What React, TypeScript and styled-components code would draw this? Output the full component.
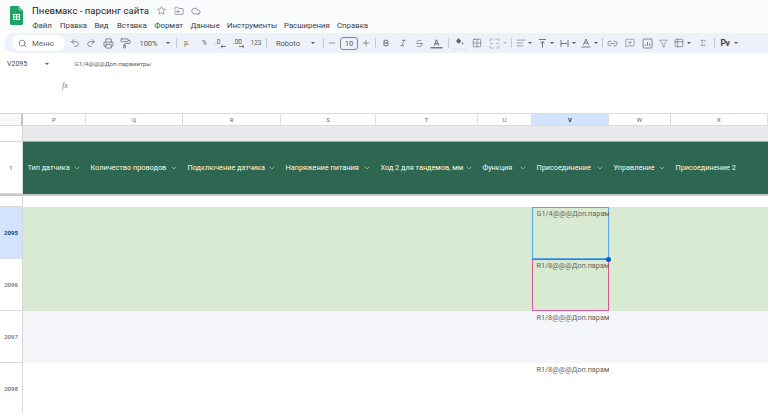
import React from "react";
import styled, { createGlobalStyle } from "styled-components";
import { Search, Undo2, Redo2, Printer, PaintRoller, Minus, Plus, Bold, Italic, Strikethrough, Grid2x2, AlignLeft, Link2, MessageSquarePlus, Filter, Sigma, Star, Cloud, ChevronDown, FolderInput, Table2 } from "lucide-react";

const Global = createGlobalStyle`
  html, body { margin: 0; padding: 0; background: #fff; overflow: hidden; }
  #root { width: 768px; height: 413px; overflow: hidden; }
  * { box-sizing: border-box; }
`;

const Page = styled.div`
  width: 768px; height: 413px; display: flex; flex-direction: column; position: relative;
  font-family: Roboto, "Liberation Sans", sans-serif; color: #444746; background: #fff; overflow: hidden;
`;
const TitleBar = styled.header`
  height: 33px; flex: none; background: #f9fbfd; display: flex; align-items: flex-start; padding: 6px 0 0 10px; gap: 9px;
`;
const TitleStack = styled.div`display: flex; flex-direction: column;`;
const TitleRow = styled.div`display: flex; align-items: center; height: 11px; margin-top: -1px;`;
const DocTitle = styled.div`font-size: 9.6px; line-height: 11px; color: #1f1f1f; width: 125px; white-space: nowrap;`;
const TitleIcon = styled.span<{ $ml: number }>`display: flex; margin-left: ${p => p.$ml}px; color: #5a5d60;`;
const MenuBar = styled.nav`display: flex; margin: 5px 0 0 0.5px; height: 10px; align-items: center;`;
const MenuItem = styled.span<{ $w: number }>`font-size: 7.8px; line-height: 10px; color: #3c4043; width: ${p => p.$w}px; white-space: nowrap;`;

const Toolbar = styled.div`
  height: 20px; flex: none; margin-left: 4px; background: #edf2fa; border-radius: 10px 0 0 10px;
  display: flex; align-items: center; padding-left: 8px;
`;
const MenuPill = styled.div`
  width: 53px; height: 16px; flex: none; border-radius: 8px; background: #fff; display: flex; align-items: center;
  padding-left: 6px; gap: 5px; font-size: 7.8px; color: #5f6368;
`;
const Tool = styled.span<{ $w: number; $ml: number }>`
  flex: none; width: ${p => p.$w}px; margin-left: ${p => p.$ml}px; height: 16px; display: flex; align-items: center; justify-content: center;
  font-size: 7.5px; color: #53565a; white-space: nowrap;
`;
const Small = styled.span`font-size: 6.5px; color: #5a5d60;`;
const Caret = styled.span<{ $muted?: boolean }>`
  width: 0; height: 0; border-left: 2.5px solid transparent; border-right: 2.5px solid transparent;
  border-top: 2.5px solid ${p => (p.$muted ? "#b5b8bb" : "#53565a")};
`;
const Sep = styled.span`width: 1px; height: 10px; background: #c7cbd1;`;
const SizeBox = styled.span`width: 18px; height: 13px; border: 1px solid #80868b; border-radius: 3px; display: flex; align-items: center; justify-content: center; font-size: 7.5px;`;
const PvMark = styled.span`font-size: 8.5px; font-weight: 700; color: #3c4043; letter-spacing: -0.3px;`;

const FormulaArea = styled.div`
  height: 60px; flex: none; background: #fff; display: flex; flex-direction: column; padding-left: 7px;
`;
const NameRow = styled.div`display: flex; align-items: center; height: 14px; margin-top: 4px; font-size: 7px; color: #444746;`;
const NameBox = styled.span`width: 38px;`;
const NameCaret = styled(Caret)`margin-right: 25.5px;`;
const FormulaText = styled.span`font-size: 6.2px; color: #5c5f62; white-space: nowrap;`;
const FxRow = styled.div`margin: 10px 0 0 55px; font-family: "Liberation Serif", serif; font-style: italic; font-size: 8px; color: #777;`;

const Sheet = styled.div`flex: 1; min-height: 0; display: flex; flex-direction: column; overflow: hidden;`;
const Row = styled.div<{ $h: number; $bg?: string }>`
  display: grid; grid-template-columns: 23px 63px 97px 98px 95px 102px 54px 77px 62px 97px;
  flex: none; height: ${p => p.$h}px; background: ${p => p.$bg || "#fff"};
`;
const ColHead = styled.div<{ $active?: boolean }>`
  display: flex; align-items: center; justify-content: center; font-size: 6px; color: ${p => (p.$active ? "#0b3d78" : "#5f6368")};
  font-weight: ${p => (p.$active ? 700 : 400)}; background: ${p => (p.$active ? "#d3e3fd" : "#fff")};
  border-top: 1px solid #dadce0; border-right: 1px solid #dadce0; border-bottom: 1px solid #dadce0;
`;
const Corner = styled.div`background: #f8f9fa; border-top: 1px solid #dadce0; border-right: 2px solid #c4c7c5; border-bottom: 1px solid #dadce0;`;
const RowHead = styled.div<{ $active?: boolean }>`
  display: flex; align-items: center; justify-content: center; font-size: 6px; font-weight: ${p => (p.$active ? 700 : 500)};
  color: ${p => (p.$active ? "#0b3d78" : "#6a6d70")}; background: ${p => (p.$active ? "#d3e3fd" : "#fff")};
  border-right: 1px solid #d3d5d8; border-bottom: 1px solid #dadce0;
`;
const FrozenRule = styled.div`flex: none; height: 2px; background: #c6c8ca;`;
const Band = styled.div`grid-column: 2 / -1; background: #e8eaed; border-bottom: 1px solid #a5abad;`;
const HeaderCell = styled.div`
  display: flex; align-items: center; justify-content: space-between; padding: 0 5px 1px 4.5px; min-width: 0;
  font-size: 7.3px; font-weight: 400; color: #fdf8e4; white-space: nowrap; background: #2d6651;
`;
const HeaderChevron = styled(ChevronDown)`flex: none; color: #e8efe6;`;
const Cell = styled.div<{ $tone?: "blue" | "pink" }>`
  position: relative; padding: 2px 0 0 4.5px; font-size: 7.3px; line-height: 9px; color: #5e6462; white-space: nowrap; overflow: hidden;
  ${p => p.$tone === "blue" ? "box-shadow: inset 0 0 0 1px #5aa7e8, 0 1px 0 0 #2f7fd8; z-index: 2; overflow: visible;" : ""}
  ${p => p.$tone === "pink" ? "box-shadow: inset 0 0 0 1px #d65a9b;" : ""}
`;
const Clip = styled.div`width: 100%; overflow: hidden;`;
const Handle = styled.span`
  position: absolute; left: 606px; top: 257px; width: 5px; height: 5px; border-radius: 50%; background: #0b57d0; z-index: 3;
`;

const LetterA = ({ bar }: { bar: string }) => (
  <svg width="13" height="13" viewBox="0 0 13 13" fill="none">
    <path d="M4.2 8.6 6.5 2.8 8.8 8.6M5 6.8h3" stroke="#53565a" strokeWidth="0.9" />
    <rect x="0.5" y="10.2" width="12" height="1.2" fill={bar} />
  </svg>
);
const FillIcon = () => (
  <svg width="13" height="15" viewBox="0 0 13 15">
    <path d="M5.4 2 8.4 5.2 5.8 7.8 3 5.2Z" fill="#5f6266" />
    <circle cx="9.6" cy="7.4" r="0.8" fill="#5f6266" />
    <rect x="0" y="12.6" width="13" height="1" fill="#d5e8cf" />
  </svg>
);
const DecimalIcon = ({ label, plus }: { label: string; plus?: boolean }) => (
  <svg width="14" height="12" viewBox="0 0 14 12" fill="none">
    <text x="1" y="7" fontSize="6.5" fontFamily="Roboto" fill="#53565a">{label}</text>
    <path d={plus ? "M7 9.5h5M10.4 8l1.6 1.5-1.6 1.5" : "M12 9.5H7M8.6 8 7 9.5 8.6 11"} stroke="#53565a" strokeWidth="0.8" />
  </svg>
);
const ValignIcon = () => (
  <svg width="11" height="11" viewBox="0 0 11 11" fill="none" stroke="#53565a" strokeWidth="0.8">
    <path d="M2 1.5h7M5.5 9.5V3.5M3.5 5.3l2-2 2 2" />
  </svg>
);
const WrapIcon = () => (
  <svg width="11" height="11" viewBox="0 0 11 11" fill="none" stroke="#53565a" strokeWidth="0.8">
    <path d="M2 2v7M9 2v7M2 5.5h6" />
  </svg>
);
const RotateIcon = () => (
  <svg width="12" height="12" viewBox="0 0 12 12" fill="none" stroke="#53565a" strokeWidth="0.8">
    <path d="M3.4 7.8 6 2l2.6 5.8M4.2 6h3.6M1.5 10h9" />
  </svg>
);
const MergeIcon = () => (
  <svg width="11" height="11" viewBox="0 0 11 11" fill="none" stroke="#b5b8bb" strokeWidth="1">
    <path d="M1 3.5V1h3.5M6.5 1H10v2.5M10 7.5V10H6.5M4.5 10H1V7.5M1 5.5h3M7 5.5h3" />
  </svg>
);
const ChartIcon = () => (
  <svg width="11" height="11" viewBox="0 0 11 11" fill="none" stroke="#6a6d70" strokeWidth="0.8">
    <rect x="1" y="1" width="9" height="9" rx="1" />
    <path d="M3.4 8V6.4M5.5 8V4M7.6 8V5.4" />
  </svg>
);

const sw = 1.5;
const tools: { c: number; w: number; n: React.ReactNode }[] = [
  { c: 75, w: 14, n: <Undo2 size={10} strokeWidth={sw} /> },
  { c: 91, w: 14, n: <Redo2 size={10} strokeWidth={sw} /> },
  { c: 108.5, w: 14, n: <Printer size={11} strokeWidth={sw} /> },
  { c: 125, w: 14, n: <PaintRoller size={11} strokeWidth={sw} /> },
  { c: 148.5, w: 22, n: "100%" },
  { c: 167.5, w: 6, n: <Caret /> },
  { c: 176.5, w: 1, n: <Sep /> },
  { c: 187, w: 10, n: <Small>р.</Small> },
  { c: 204.5, w: 12, n: <Small>%</Small> },
  { c: 220.5, w: 14, n: <DecimalIcon label=".0" /> },
  { c: 239, w: 14, n: <DecimalIcon label=".00" plus /> },
  { c: 256, w: 14, n: <Small>123</Small> },
  { c: 266.5, w: 1, n: <Sep /> },
  { c: 288, w: 28, n: "Roboto" },
  { c: 313, w: 6, n: <Caret /> },
  { c: 323, w: 1, n: <Sep /> },
  { c: 332, w: 12, n: <Minus size={10} strokeWidth={1.4} /> },
  { c: 349, w: 18, n: <SizeBox>10</SizeBox> },
  { c: 366, w: 12, n: <Plus size={10} strokeWidth={1.4} /> },
  { c: 375, w: 1, n: <Sep /> },
  { c: 386, w: 12, n: <Bold size={8} strokeWidth={2.4} /> },
  { c: 402.5, w: 12, n: <Italic size={8} strokeWidth={1.8} /> },
  { c: 419.5, w: 12, n: <Strikethrough size={9} strokeWidth={1.4} /> },
  { c: 436.5, w: 13, n: <LetterA bar="#55585c" /> },
  { c: 448.5, w: 1, n: <Sep /> },
  { c: 459, w: 13, n: <FillIcon /> },
  { c: 477, w: 12, n: <Grid2x2 size={10} strokeWidth={1.3} /> },
  { c: 494.5, w: 12, n: <MergeIcon /> },
  { c: 505, w: 6, n: <Caret $muted /> },
  { c: 511, w: 1, n: <Sep /> },
  { c: 520.5, w: 12, n: <AlignLeft size={10} strokeWidth={1.3} /> },
  { c: 530, w: 6, n: <Caret /> },
  { c: 542.5, w: 12, n: <ValignIcon /> },
  { c: 552, w: 6, n: <Caret /> },
  { c: 564, w: 12, n: <WrapIcon /> },
  { c: 573.5, w: 6, n: <Caret /> },
  { c: 585.5, w: 12, n: <RotateIcon /> },
  { c: 595.5, w: 6, n: <Caret /> },
  { c: 602.5, w: 1, n: <Sep /> },
  { c: 612.5, w: 12, n: <Link2 size={11} strokeWidth={1.3} /> },
  { c: 630, w: 12, n: <MessageSquarePlus size={10} strokeWidth={1.2} /> },
  { c: 647, w: 12, n: <ChartIcon /> },
  { c: 663.5, w: 12, n: <Filter size={9} strokeWidth={1.3} /> },
  { c: 679, w: 12, n: <Table2 size={10} strokeWidth={1.3} /> },
  { c: 689, w: 6, n: <Caret /> },
  { c: 703, w: 12, n: <Sigma size={8} strokeWidth={1.5} /> },
  { c: 714.5, w: 1, n: <Sep /> },
  { c: 725, w: 14, n: <PvMark>Pv</PvMark> },
  { c: 736, w: 6, n: <Caret /> },
];

const placed = tools.reduce<{ right: number; out: (typeof tools[number] & { ml: number })[] }>(
  (acc, t) => {
    const left = t.c - t.w / 2;
    acc.out.push({ ...t, ml: left - acc.right });
    acc.right = left + t.w;
    return acc;
  },
  { right: 65, out: [] }
).out;

const menus: [string, number][] = [
  ["Файл", 27.5], ["Правка", 34.5], ["Вид", 22.5], ["Вставка", 37.5], ["Формат", 36], ["Данные", 36.5],
  ["Инструменты", 57], ["Расширения", 53], ["Справка", 40],
];
const cols = ["P", "Q", "R", "S", "T", "U", "V", "W", "X"];
const heads = ["Тип датчика", "Количество проводов", "Подключение датчика", "Напряжение питания", "Ход 2 для тандемов, мм", "Функция", "Присоединение", "Управление"];

const SheetsLogo = () => (
  <svg width="13" height="19" viewBox="0 0 13 19">
    <path d="M1.4 0H8.5L13 4.5V17.6c0 .8-.6 1.4-1.4 1.4H1.4C.6 19 0 18.4 0 17.6V1.4C0 .6.6 0 1.4 0Z" fill="#1ea362" />
    <path d="M8.5 0 13 4.5H9.5a1 1 0 0 1-1-1Z" fill="#7fc79a" />
    <path d="M3 8h7v6H3ZM4 9v1.5h2V9Zm3 0v1.5h2V9Zm-3 2.5V13h2v-1.5Zm3 0V13h2v-1.5Z" fill="#fff" fillRule="evenodd" />
  </svg>
);

export default function App() {
  return (
    <Page>
      <Global />
      <TitleBar>
        <SheetsLogo />
        <TitleStack>
          <TitleRow>
            <DocTitle>Пневмакс - парсинг сайта</DocTitle>
            <TitleIcon $ml={0}><Star size={9} strokeWidth={1.5} /></TitleIcon>
            <TitleIcon $ml={8}><FolderInput size={10} strokeWidth={1.4} /></TitleIcon>
            <TitleIcon $ml={7}><Cloud size={10} strokeWidth={1.4} /></TitleIcon>
          </TitleRow>
          <MenuBar>
            {menus.map(([m, w]) => <MenuItem key={m} $w={w}>{m}</MenuItem>)}
          </MenuBar>
        </TitleStack>
      </TitleBar>
      <Toolbar>
        <MenuPill><Search size={9} strokeWidth={1.8} />Меню</MenuPill>
        {placed.map((t, i) => <Tool key={i} $w={t.w} $ml={t.ml}>{t.n}</Tool>)}
      </Toolbar>
      <FormulaArea>
        <NameRow>
          <NameBox>V2095</NameBox>
          <NameCaret />
          <FormulaText>G1/4@@@Доп.параметры</FormulaText>
        </NameRow>
        <FxRow>fx</FxRow>
      </FormulaArea>
      <Sheet>
        <Row $h={13}>
          <Corner />
          {cols.map(c => <ColHead key={c} $active={c === "V"}>{c}</ColHead>)}
        </Row>
        <Row $h={16}>
          <RowHead />
          <Band />
        </Row>
        <Row $h={52}>
          <RowHead>1</RowHead>
          {heads.map(h => <HeaderCell key={h}>{h}<HeaderChevron size={8} strokeWidth={1.6} /></HeaderCell>)}
          <HeaderCell>Присоединение 2</HeaderCell>
        </Row>
        <FrozenRule />
        <Row $h={11}><RowHead /></Row>
        <Row $h={52} $bg="#d9ead3">
          <RowHead $active>2095</RowHead>
          {cols.map(c => c === "V"
            ? <Cell key={c} $tone="blue"><Clip>G1/4@@@Доп.параметры</Clip></Cell>
            : <Cell key={c} />)}
        </Row>
        <Row $h={52} $bg="#d9ead3">
          <RowHead>2096</RowHead>
          {cols.map(c => c === "V"
            ? <Cell key={c} $tone="pink">R1/8@@@Доп.параметры</Cell>
            : <Cell key={c} />)}
        </Row>
        <Row $h={52} $bg="#f4f6f9">
          <RowHead>2097</RowHead>
          {cols.map(c => <Cell key={c}>{c === "V" ? "R1/8@@@Доп.параметры" : ""}</Cell>)}
        </Row>
        <Row $h={52}>
          <RowHead>2098</RowHead>
          {cols.map(c => <Cell key={c}>{c === "V" ? "R1/8@@@Доп.параметры" : ""}</Cell>)}
        </Row>
      </Sheet>
      <Handle />
    </Page>
  );
}
